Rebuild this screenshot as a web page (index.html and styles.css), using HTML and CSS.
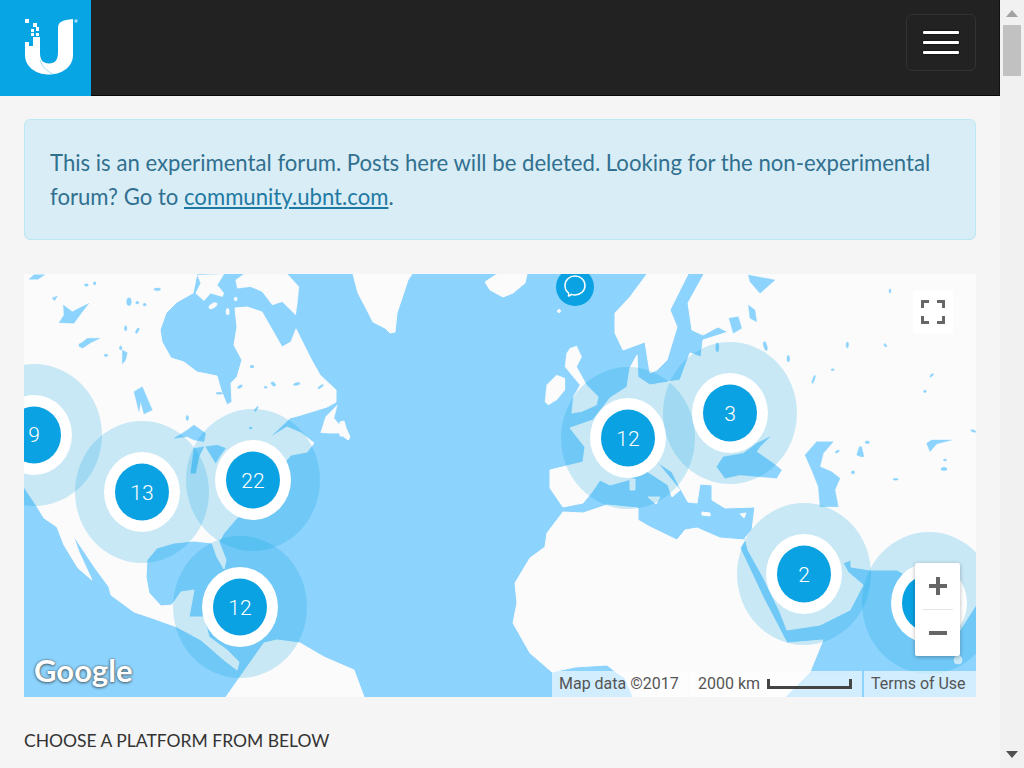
FILE: index.html
```html
<!DOCTYPE html>
<html lang="en">
<head>
<meta charset="utf-8">
<title>Ubiquiti Community Map</title>
<link rel="stylesheet" href="styles.css">
</head>
<body>
<div class="page">
  <div class="content">
    <header class="topbar">
      <a class="brand" aria-label="Ubiquiti">
        <svg class="brand-logo" viewBox="0 0 91 96" width="91" height="96">
          <path class="logo-u" d="M25 42H29V46H33V37H40V53C40 60 43 63.500 49 63.500C55 63.500 58 60 58 52V28C58 22 62 20 73 19V55C73 66 63 74.500 49 74.500C35 74.500 25 66 25 55Z"/>
          <path class="logo-swoosh" d="M40 60C42 66 46 71 53 74"/>
          <rect class="logo-u" x="25" y="19" width="4" height="4"/>
          <rect class="logo-u" x="33" y="23" width="4" height="4"/>
          <rect class="logo-u" x="36" y="27" width="3" height="4"/>
          <rect class="logo-u" x="31" y="29" width="3" height="3"/>
          <rect class="logo-u" x="31" y="33" width="3" height="3"/>
          <rect class="logo-u" x="36" y="33" width="3" height="3"/>
          <circle class="logo-mark" cx="76" cy="21" r="1.700"/>
        </svg>
      </a>
      <button class="menu-toggle" aria-label="Toggle navigation">
        <span class="menu-bar"></span>
        <span class="menu-bar"></span>
        <span class="menu-bar"></span>
      </button>
    </header>

    <main class="main">
      <div class="alert">This is an experimental forum. Posts here will be deleted. Looking for the non-experimental forum? Go to <a class="alert-link">community.ubnt.com</a>.</div>

      <section class="map">
        <svg class="map-canvas" viewBox="24 274 952 423" width="952" height="423">
          <rect class="water" x="24" y="274" width="952" height="423"/>
          <g class="land">
            <!-- North and Central America -->
            <polygon points="24,274 197,274 193,293 177,302 166,313 160,330 162,342 171,358 184,362 197,372 217,376 221,390 227,405 232,402 231,383 237,377 242,360 234,345 237,327 235,308 247,307 262,312 274,333 282,347 291,342 296,329 311,359 320,375 336,390 336,402 327,407 301,415 290,418 269,438 287,427 301,433 314,443 307,452 291,455 284,463 282,478 265,495 237,518 224,533 219,542 226,560 224,569 217,557 212,543 194,541 174,543 157,548 147,560 146,577 149,593 161,606 172,605 174,602 181,592 194,590 189,617 204,617 209,637 227,650 239,662 237,670 224,660 201,640 177,627 152,618 134,612 111,595 109,587 95,568 73,535 79,552 92,580 78,568 64,545 57,527 44,518 36,505 24,487"/>
            <!-- South America -->
            <polygon points="226,697 240,677 264,643 277,640 300,643 324,657 354,670 364,697"/>
            <!-- Arctic islands -->
            <g transform="translate(24 270) scale(.3333)">
              <polygon points="520,15 600,12 580,45 600,70 595,80 560,70 540,92 515,70 530,40"/>
              <polygon points="635,30 660,12 790,12 825,50 820,100 815,135 775,95 745,105 715,65 680,50 640,55"/>
              <polygon points="890,488 905,440 940,405 930,445 975,495 975,510 945,490 920,490"/>
              <ellipse cx="567" cy="107" rx="14" ry="7" transform="rotate(-30 567 107)"/>
              <ellipse cx="611" cy="125" rx="5" ry="10"/>
              <ellipse cx="635" cy="87" rx="5" ry="6"/>
            </g>
            <!-- Greenland, Iceland, Azores, UK -->
            <polygon points="353,274 358,293 367,310 373,322 385,328 390,333 395,332 397,313 408,280 412,274"/>
            <polygon points="485,282 497,274 527,274 525,283 513,293 503,297 490,290"/>
            <polygon points="340,422 344,421 346,428 350,437 348,440 343,436 340,436"/>
            <g transform="translate(340 270) scale(.3333)">
              <polygon points="690,235 710,228 725,260 710,290 740,345 775,380 770,405 725,425 695,430 700,380 720,345 695,315 675,290 680,250"/>
              <polygon points="620,345 650,315 675,325 675,360 650,390 625,405 615,395"/>
            </g>
            <!-- Scandinavia -->
            <polygon points="647,274 688,274 670,310 677,327 667,360 657,370 650,373 645,342 623,350 615,333 615,313 630,297"/>
            <!-- Eurasia -->
            <polygon points="704,274 976,274 976,605 960,630 952,655 935,620 915,580 897,570 870,570 851,567 851,560 843,563 848,572 863,585 850,610 820,625 787,630 780,612 763,577 748,550 745,538 752,530 755,507 725,508 712,500 712,485 700,484 697,503 688,502 680,488 672,472 657,462 680,490 672,497 668,485 645,470 628,480 610,485 600,480 592,492 583,503 563,507 550,488 550,470 583,462 585,447 570,428 593,420 610,398 627,387 630,368 637,355 638,377 650,385 680,380 690,353 701,357 703,340 728,332 718,327 703,335 692,330 688,303"/>
            <!-- Africa -->
            <polygon points="563,512 583,513 607,505 638,508 638,520 650,527 677,540 685,530 697,528 720,538 745,540 740,548 763,597 787,643 823,640 810,672 785,697 633,697 625,678 616,672 607,665 575,667 552,672 530,653 513,623 517,603 515,583 530,558 545,547 547,533"/>
            <!-- Mediterranean islands -->
            <polygon points="630,479 635,479 635,490 630,490"/>
            <polygon points="648,497 660,497 656,504"/>
            <polygon points="702,512 710,513 710,516 702,515"/>
            <polygon points="740,514 746,513 744,518"/>
            <circle cx="958" cy="660" r="4"/>
            <circle cx="559" cy="311" r="1.500"/>
          </g>
          <g class="water-shapes">
            <g transform="translate(24 270) scale(.3333)">
              <polygon points="15,28 30,14 62,14 42,28"/>
              <polygon points="105,158 120,135 118,105 145,125 165,115 195,100 175,125 150,160"/>
              <polygon points="165,225 190,205 228,205 200,218 175,235"/>
              <polygon points="295,240 310,248 305,270 295,282"/>
              <polygon points="330,365 355,350 385,420 360,432 350,395 345,425"/>
              <polygon points="450,505 490,480 510,465 545,490 540,515 510,510 490,500"/>
              <polygon points="500,610 510,535 540,530 525,560 515,610"/>
              <polygon points="545,530 580,525 605,535 590,555 575,580 560,555"/>
              <polygon points="84,84 100,78 92,92"/>
              <ellipse cx="315" cy="95" rx="7" ry="12"/>
              <ellipse cx="400" cy="58" rx="10" ry="4"/>
              <ellipse cx="187" cy="45" rx="6" ry="4"/>
              <ellipse cx="212" cy="40" rx="4" ry="5"/>
              <ellipse cx="340" cy="98" rx="5" ry="4"/>
              <ellipse cx="362" cy="104" rx="5" ry="4"/>
              <ellipse cx="305" cy="175" rx="4" ry="8"/>
              <ellipse cx="340" cy="182" rx="4" ry="9" transform="rotate(30 340 182)"/>
              <ellipse cx="169" cy="226" rx="4" ry="6"/>
              <ellipse cx="246" cy="256" rx="5" ry="4"/>
              <ellipse cx="290" cy="234" rx="4" ry="6"/>
              <ellipse cx="684" cy="290" rx="6" ry="4"/>
              <ellipse cx="648" cy="350" rx="8" ry="4" transform="rotate(-30 648 350)"/>
              <ellipse cx="748" cy="342" rx="8" ry="5" transform="rotate(40 748 342)"/>
              <ellipse cx="818" cy="342" rx="10" ry="4" transform="rotate(-15 818 342)"/>
              <ellipse cx="890" cy="350" rx="10" ry="3" transform="rotate(-35 890 350)"/>
              <ellipse cx="725" cy="352" rx="5" ry="3"/>
              <ellipse cx="586" cy="370" rx="10" ry="3"/>
              <ellipse cx="697" cy="417" rx="3" ry="9" transform="rotate(35 697 417)"/>
              <ellipse cx="490" cy="444" rx="4" ry="8"/>
              <ellipse cx="680" cy="474" rx="5" ry="3"/>
            </g>
            <g transform="translate(660 270) scale(.3333)">
              <polygon points="265,15 345,30 300,70 270,35"/>
              <polygon points="207,145 235,140 245,175 220,190"/>
              <polygon points="265,105 285,120 290,155 270,145"/>
              <polygon points="170,590 190,560 250,550 290,520 330,500 300,530 290,545 340,580 365,600 350,625 240,615 195,625"/>
              <polygon points="435,555 470,515 520,515 490,550 480,590 515,605 540,625 525,660 535,710 480,710 475,650 455,600"/>
              <polygon points="800,520 815,510 875,510 830,522 810,545"/>
              <polygon points="590,555 598,530 605,530 612,560 602,560"/>
              <ellipse cx="690" cy="63" rx="3" ry="7"/>
              <ellipse cx="172" cy="232" rx="5" ry="14"/>
              <ellipse cx="316" cy="228" rx="5" ry="14" transform="rotate(-15 316 228)"/>
              <ellipse cx="385" cy="266" rx="4" ry="10"/>
              <ellipse cx="562" cy="225" rx="4" ry="9"/>
              <ellipse cx="676" cy="226" rx="3" ry="6" transform="rotate(-35 676 226)"/>
              <ellipse cx="518" cy="299" rx="5" ry="3"/>
              <ellipse cx="461" cy="328" rx="3" ry="13" transform="rotate(20 461 328)"/>
              <ellipse cx="815" cy="316" rx="3" ry="7" transform="rotate(45 815 316)"/>
              <ellipse cx="795" cy="364" rx="4" ry="4"/>
              <ellipse cx="940" cy="483" rx="8" ry="3" transform="rotate(20 940 483)"/>
              <ellipse cx="622" cy="517" rx="7" ry="4"/>
              <ellipse cx="532" cy="545" rx="7" ry="3" transform="rotate(-30 532 545)"/>
              <ellipse cx="579" cy="607" rx="5" ry="5"/>
              <ellipse cx="852" cy="597" rx="9" ry="5"/>
              <ellipse cx="707" cy="628" rx="8" ry="3"/>
              <ellipse cx="855" cy="570" rx="5" ry="3"/>
            </g>
          </g>
          <g class="cluster">
            <ellipse class="halo" cx="34" cy="435" rx="68" ry="71"/>
            <ellipse class="halo" cx="142" cy="492" rx="67" ry="71"/>
            <ellipse class="halo" cx="253" cy="480" rx="67" ry="71"/>
            <ellipse class="halo" cx="240" cy="607" rx="67" ry="71"/>
            <ellipse class="halo" cx="628" cy="438" rx="67" ry="71"/>
            <ellipse class="halo" cx="730" cy="413" rx="67" ry="71"/>
            <ellipse class="halo" cx="804" cy="574" rx="67" ry="71"/>
            <ellipse class="halo" cx="929" cy="603" rx="67" ry="71"/>
            <ellipse class="rim" cx="34" cy="435" rx="38" ry="40"/><ellipse class="dot" cx="34" cy="435" rx="27" ry="28.500"/>
            <ellipse class="rim" cx="142" cy="492" rx="38" ry="40"/><ellipse class="dot" cx="142" cy="492" rx="27" ry="28.500"/>
            <ellipse class="rim" cx="253" cy="480" rx="38" ry="40"/><ellipse class="dot" cx="253" cy="480" rx="27" ry="28.500"/>
            <ellipse class="rim" cx="240" cy="607" rx="38" ry="40"/><ellipse class="dot" cx="240" cy="607" rx="27" ry="28.500"/>
            <ellipse class="rim" cx="628" cy="438" rx="38" ry="40"/><ellipse class="dot" cx="628" cy="438" rx="27" ry="28.500"/>
            <ellipse class="rim" cx="730" cy="413" rx="38" ry="40"/><ellipse class="dot" cx="730" cy="413" rx="27" ry="28.500"/>
            <ellipse class="rim" cx="804" cy="574" rx="38" ry="40"/><ellipse class="dot" cx="804" cy="574" rx="27" ry="28.500"/>
            <ellipse class="rim" cx="929" cy="603" rx="38" ry="40"/><ellipse class="dot" cx="929" cy="603" rx="27" ry="28.500"/>
            <text class="count" x="34" y="442">9</text>
            <text class="count" x="142" y="500">13</text>
            <text class="count" x="253" y="488">22</text>
            <text class="count" x="240" y="615">12</text>
            <text class="count" x="628" y="446">12</text>
            <text class="count" x="730" y="421">3</text>
            <text class="count" x="804" y="582">2</text>
            <circle class="dot" cx="575" cy="287" r="19"/>
            <path class="bubble" d="M568.500 296C568.800 294.500 568.800 293.500 568.500 292.800C565.700 290.800 565 288 565 285.500C565 280 569.500 276 575 276C580.500 276 585 280 585 285.500C585 291 580.500 295 575 295C573.500 295 572.500 294.800 571.500 294.300C570.800 295.300 569.800 296 568.500 296Z"/>
          </g>
        </svg>

        <button class="fullscreen" aria-label="Toggle fullscreen view">
          <svg viewBox="0 0 24 24" width="24" height="24">
            <path class="fs-icon" d="M1.500 8V1.500H8M16 1.500H22.500V8M22.500 16V22.500H16M8 22.500H1.500V16"/>
          </svg>
        </button>

        <div class="zoom-control">
          <button class="zoom-btn" aria-label="Zoom in">
            <svg viewBox="0 0 18 18" width="18" height="18"><path class="zoom-glyph" d="M9 0V18M0 9H18"/></svg>
          </button>
          <span class="zoom-rule"></span>
          <button class="zoom-btn" aria-label="Zoom out">
            <svg viewBox="0 0 18 18" width="18" height="18"><path class="zoom-glyph" d="M0 9H18"/></svg>
          </button>
        </div>

        <span class="google">Google</span>

        <div class="attribution">
          <span class="attr-cell attr-data"><span class="attr-label">Map data ©2017</span></span>
          <span class="attr-cell attr-scale"><span class="attr-label">2000 km</span><i class="scale-bar"></i></span>
          <span class="attr-cell attr-terms"><span class="attr-label">Terms of Use</span></span>
        </div>
      </section>

      <h2 class="section-title">CHOOSE A PLATFORM FROM BELOW</h2>
    </main>
  </div>

  <aside class="scrollbar">
    <span class="arrow-up"></span>
    <span class="thumb"></span>
    <span class="arrow-down"></span>
  </aside>
</div>
</body>
</html>
```

FILE: styles.css
```css
* { box-sizing: border-box; }

html, body {
  margin: 0;
  height: 100%;
  overflow: hidden;
}

body {
  background: #f5f5f5;
  font-family: "Lato", "Liberation Sans", sans-serif;
  color: #333;
}

.page {
  display: flex;
  width: 1024px;
  height: 768px;
}

.content {
  width: 1000px;
  flex: none;
  overflow: hidden;
}

.topbar {
  display: flex;
  align-items: stretch;
  justify-content: space-between;
  height: 96px;
  background: #222;
  border-bottom: 1px solid #080808;
  border-right: 1px solid #111;
}

.brand {
  display: block;
  width: 91px;
  height: 96px;
  background: #08a5e5;
}

.brand-logo { display: block; }
.logo-u { fill: #fff; }
.logo-swoosh { fill: none; stroke: #9fdcf5; stroke-width: 1; }
.logo-mark { fill: #a8def5; }

.menu-toggle {
  display: flex;
  flex-direction: column;
  align-items: center;
  justify-content: center;
  gap: 7px;
  width: 70px;
  height: 57px;
  margin: 14px 23px 0 0;
  padding: 0;
  background: transparent;
  border: 1px solid #333;
  border-radius: 6px;
}

.menu-bar {
  display: block;
  width: 36px;
  height: 3px;
  background: #fff;
  border-radius: 1px;
  box-shadow: 0 0 2px #000;
}

.main { padding: 23px 24px 0; }

.alert {
  height: 121px;
  padding: 26px 25px 0;
  background: #d9edf7;
  border: 1px solid #bce8f1;
  border-radius: 6px;
  color: #31708f;
  font-size: 22.150px;
  line-height: 34px;
}

.alert-link {
  color: #1f7aa3;
  text-decoration: underline;
}

.map {
  position: relative;
  width: 952px;
  height: 423px;
  margin-top: 34px;
  overflow: hidden;
}

.map-canvas { display: block; }

.water { fill: #8cd3fd; }
.water-shapes {
  fill: #8cd3fd;
  stroke: #8cd3fd;
  stroke-width: 1;
  stroke-linejoin: round;
}
.land {
  fill: #fbfbfb;
  stroke: #fbfbfb;
  stroke-width: 1;
  stroke-linejoin: round;
}
.halo { fill: #00a0e1; fill-opacity: .2; }
.rim { fill: #fff; }
.dot { fill: #0aa2e2; }

.count {
  fill: #fff;
  font-family: "Roboto", "Liberation Sans", sans-serif;
  font-size: 21px;
  font-weight: 300;
  text-anchor: middle;
}

.bubble {
  fill: none;
  stroke: #fff;
  stroke-width: 1.500;
  stroke-linejoin: round;
}

.fullscreen {
  position: absolute;
  top: 17px;
  right: 23px;
  display: flex;
  align-items: center;
  justify-content: center;
  width: 40px;
  height: 42px;
  padding: 0;
  background: #fff;
  border: 0;
  border-radius: 2px;
}

.fs-icon {
  fill: none;
  stroke: #666;
  stroke-width: 3;
}

.zoom-control {
  position: absolute;
  top: 289px;
  right: 16px;
  display: flex;
  flex-direction: column;
  align-items: center;
  width: 45px;
  height: 93px;
  background: #fff;
  border-radius: 2px;
  box-shadow: 0 1px 4px rgba(0, 0, 0, .3);
}

.zoom-btn {
  display: flex;
  align-items: center;
  justify-content: center;
  width: 45px;
  flex: 1;
  padding: 0;
  background: transparent;
  border: 0;
}

.zoom-rule {
  display: block;
  width: 31px;
  height: 1px;
  background: #e6e6e6;
}

.zoom-glyph {
  fill: none;
  stroke: #666;
  stroke-width: 4;
}

.google {
  position: absolute;
  left: 10px;
  bottom: 7px;
  color: #fff;
  font-family: "Lato", "Liberation Sans", sans-serif;
  font-size: 31px;
  line-height: 40px;
  font-weight: 700;
  text-shadow: 0 0 2px #555, 0 1px 3px rgba(0, 0, 0, .5);
}

.attribution {
  position: absolute;
  right: 0;
  bottom: 0;
  display: flex;
  height: 26px;
  gap: 2px;
  color: #555;
  font-family: "Roboto", "Liberation Sans", sans-serif;
  font-size: 17px;
  line-height: 24px;
}

.attr-cell {
  display: flex;
  align-items: flex-start;
  background: rgba(255, 255, 255, .6);
  white-space: nowrap;
}

.attr-label {
  display: block;
  width: 62px;
  transform: scaleX(.94);
  transform-origin: left center;
}

.attr-data { width: 136px; padding-left: 7px; }
.attr-scale { width: 172px; padding-left: 8px; }
.attr-terms { width: 112px; padding-left: 7px; }

.scale-bar {
  display: block;
  width: 85px;
  height: 10px;
  margin: 8px 0 0 7px;
  border: solid #444;
  border-width: 0 3px 3px;
  box-shadow: 0 0 1px #fff;
}

.section-title {
  margin: 32px 0 0;
  color: #333;
  font-size: 17.500px;
  font-weight: 400;
  line-height: 24px;
}

.scrollbar {
  position: relative;
  width: 24px;
  flex: none;
  background: #f1f1f1;
}

.arrow-up, .arrow-down {
  position: absolute;
  left: 6px;
  width: 0;
  height: 0;
  border-left: 6px solid transparent;
  border-right: 6px solid transparent;
}

.arrow-up { top: 10px; border-bottom: 7px solid #a3a3a3; }
.arrow-down { bottom: 10px; border-top: 7px solid #505050; }

.thumb {
  position: absolute;
  top: 25px;
  left: 3px;
  width: 18px;
  height: 51px;
  background: #c1c1c1;
}
```
